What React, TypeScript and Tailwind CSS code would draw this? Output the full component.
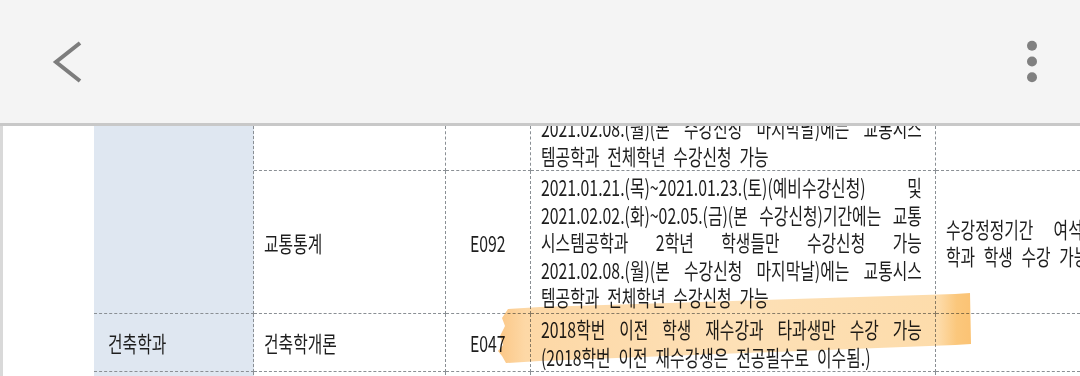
import React from "react";

type Line = string[] | string;

const Lines = ({ lines }: { lines: Line[] }) => (
    <div className="w-[529px] shrink-0 origin-left scale-x-[0.72] leading-[27.5px]">
        {lines.map((l, i) =>
            Array.isArray(l) ? (
                <div key={i} className="flex justify-between whitespace-nowrap">
                    {l.map((w, j) => <span key={j}>{w}</span>)}
                </div>
            ) : (
                <div key={i} className="whitespace-nowrap [word-spacing:6px]">{l}</div>
            )
        )}
    </div>
);

const Txt = ({ children, center }: { children: React.ReactNode; center?: boolean }) => (
    <span className={`inline-block whitespace-nowrap scale-x-[0.72] ${center ? "origin-center" : "origin-left"}`}>
        {children}
    </span>
);

const cell = "border-dashed border-[#8a8f94]";

const Header: React.FC = () => (
    <div className="h-[126px] shrink-0 bg-[#f4f4f4] border-b-[3px] border-[#c8c8c8] flex items-center justify-between">
        <svg className="ml-[50px]" width="34" height="46" viewBox="0 0 34 46">
            <polyline points="30,4 6,23 30,42" fill="none" stroke="#7d7d7d" strokeWidth="4" />
        </svg>
        <svg className="mr-[42px]" width="12" height="46" viewBox="0 0 12 46">
            <circle cx="6" cy="6.8" r="5" fill="#808080" />
            <circle cx="6" cy="22.5" r="5" fill="#808080" />
            <circle cx="6" cy="38.2" r="5" fill="#808080" />
        </svg>
    </div>
);

const App: React.FC = () => {
    const prevLines: Line[] = [
        ["2021.02.02.(화)~02.05.(금)(본", "수강신청)기간에는", "교통"],
        ["시스템공학과", "2학년", "학생들만", "수강신청", "가능"],
        ["2021.02.08.(월)(본", "수강신청", "마지막날)에는", "교통시스"],
        "템공학과 전체학년 수강신청 가능",
    ];
    const mainLines: Line[] = [
        ["2021.01.21.(목)~2021.01.23.(토)(예비수강신청)", "및"],
        ["2021.02.02.(화)~02.05.(금)(본", "수강신청)기간에는", "교통"],
        ["시스템공학과", "2학년", "학생들만", "수강신청", "가능"],
        ["2021.02.08.(월)(본", "수강신청", "마지막날)에는", "교통시스"],
        "템공학과 전체학년 수강신청 가능",
    ];
    const archLines: Line[] = [
        ["2018학번", "이전", "학생", "재수강과", "타과생만", "수강", "가능"],
        "(2018학번 이전 재수강생은 전공필수로 이수됨.)",
    ];

    return (
        <div
            className="relative w-[1080px] h-[376px] overflow-hidden bg-white text-[22px] text-[#1e1e1e] flex flex-col"
            style={{ fontFamily: '"Noto Sans CJK KR", "Noto Sans", sans-serif' }}
        >
            <Header />

            <div className="flex flex-1">
                <div className="w-[3px] bg-[#d9d9d9]" />
                <div className="w-[91px]" />
                <div className="flex-1 grid grid-cols-[160px_192px_85px_405px_1fr] grid-rows-[45px_143px_58px_40px]">
                    {/* row 1 (scrolled, mostly hidden) */}
                    <div className={`${cell} row-span-2 bg-[#dfe7f1] border-r border-b`} />
                    <div className={`${cell} border-r border-b`} />
                    <div className={`${cell} border-r border-b`} />
                    <div className={`${cell} border-r border-b pl-[10px] pb-px flex flex-col justify-end overflow-hidden`}>
                        <Lines lines={prevLines} />
                    </div>
                    <div className={`${cell} border-b`} />

                    {/* row 2 */}
                    <div className={`${cell} border-r border-b pl-[10px] flex items-center`}>
                        <Txt>교통통계</Txt>
                    </div>
                    <div className={`${cell} border-r border-b flex items-center justify-center`}>
                        <Txt center>E092</Txt>
                    </div>
                    <div className={`${cell} border-r border-b pl-[10px] flex flex-col justify-center`}>
                        <Lines lines={mainLines} />
                    </div>
                    <div className={`${cell} border-b pl-[10px] flex flex-col justify-center overflow-hidden leading-[27.5px]`}>
                        <div className="w-[420px] origin-left scale-x-[0.72] whitespace-nowrap">
                            <div className="flex gap-[28px]">
                                <span>수강정정기간</span>
                                <span>여석</span>
                                <span>발생시</span>
                                <span>타</span>
                            </div>
                            <div className="[word-spacing:7px]">학과 학생 수강 가능</div>
                        </div>
                    </div>

                    {/* row 3 */}
                    <div className={`${cell} bg-[#dfe7f1] border-r border-b pl-[14px] flex items-center`}>
                        <Txt>건축학과</Txt>
                    </div>
                    <div className={`${cell} border-r border-b pl-[10px] flex items-center`}>
                        <Txt>건축학개론</Txt>
                    </div>
                    <div className={`${cell} border-r border-b flex items-center justify-center`}>
                        <Txt center>E047</Txt>
                    </div>
                    <div className={`${cell} border-r border-b pl-[10px] flex flex-col justify-center`}>
                        <Lines lines={archLines} />
                    </div>
                    <div className={`${cell} border-b`} />

                    {/* row 4 */}
                    <div className={`${cell} bg-[#dfe7f1] border-r`} />
                    <div className={`${cell} border-r`} />
                    <div className={`${cell} border-r`} />
                    <div className={`${cell} border-r`} />
                    <div />
                </div>
            </div>

            {/* marker highlight */}
            <svg className="absolute inset-0 pointer-events-none mix-blend-multiply" width="1080" height="376" viewBox="0 0 1080 376">
                <defs>
                    <linearGradient id="hl" x1="497" x2="971" y1="0" y2="0" gradientUnits="userSpaceOnUse">
                        <stop offset="0" stopColor="#fbc684" />
                        <stop offset="0.06" stopColor="#fdd8a6" />
                        <stop offset="0.5" stopColor="#fde0b6" />
                        <stop offset="0.93" stopColor="#fddcab" />
                        <stop offset="0.97" stopColor="#fbc77c" />
                        <stop offset="1" stopColor="#fbc374" />
                    </linearGradient>
                </defs>
                <path
                    d="M508 309 L540 307 L955 294 L970 293 L971 344 L955 345 L540 361 L506 363 L502 356 L498 351 L503 345 L500 336 L505 326 L502 318 Z"
                    fill="url(#hl)"
                />
            </svg>
        </div>
    );
};

export default App;
